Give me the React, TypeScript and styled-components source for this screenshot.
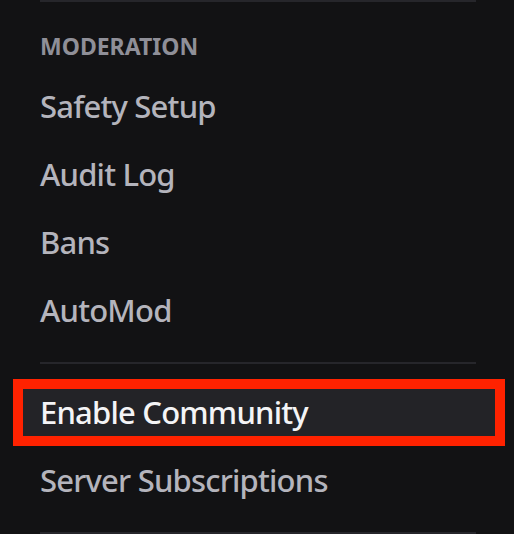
import React from "react";
import styled, { createGlobalStyle } from "styled-components";

const Global = createGlobalStyle`
  html, body {
    margin: 0;
    padding: 0;
    background: #121214;
  }
  body {
    font-family: "Noto Sans", "Open Sans", sans-serif;
    -webkit-font-smoothing: antialiased;
  }
`;

const Sidebar = styled.nav`
  width: 476px;
  padding: 0 0 0 20px;
  display: flex;
  flex-direction: column;
  background: #121214;
  min-height: 534px;
`;

const Divider = styled.div`
  height: 2px;
  margin: 0 20px 16px;
  background: #26262b;
  &:not(:first-child) {
    margin-top: 16px;
  }
`;

const Header = styled.h2`
  margin: 0;
  padding: 12px 20px;
  font-size: 23px;
  line-height: 32px;
  font-weight: 700;
  letter-spacing: 0;
  text-transform: uppercase;
  color: #8f8f98;
`;

const Item = styled.div<{ $active?: boolean }>`
  position: relative;
  height: 64px;
  margin-bottom: 4px;
  padding: 0 20px;
  display: flex;
  align-items: center;
  border-radius: 8px;
  font-size: 31px;
  font-weight: 500;
  letter-spacing: -0.8px;
  color: ${(p) => (p.$active ? "#f4f4f6" : "#b4b4bc")};
  background: ${(p) => (p.$active ? "#232327" : "transparent")};
`;

const Callout = styled.span`
  position: absolute;
  left: -7px;
  right: -9px;
  top: -1px;
  bottom: -2px;
  border: 10px solid #ff2200;
  pointer-events: none;
`;

const items = ["Safety Setup", "Audit Log", "Bans", "AutoMod"];

export default function App() {
  return (
    <>
      <Global />
      <Sidebar>
        <Divider />
        <Header>Moderation</Header>
        {items.map((t) => (
          <Item key={t}>{t}</Item>
        ))}
        <Divider />
        <Item $active>
          Enable Community
          <Callout />
        </Item>
        <Item>Server Subscriptions</Item>
        <Divider />
      </Sidebar>
    </>
  );
}
